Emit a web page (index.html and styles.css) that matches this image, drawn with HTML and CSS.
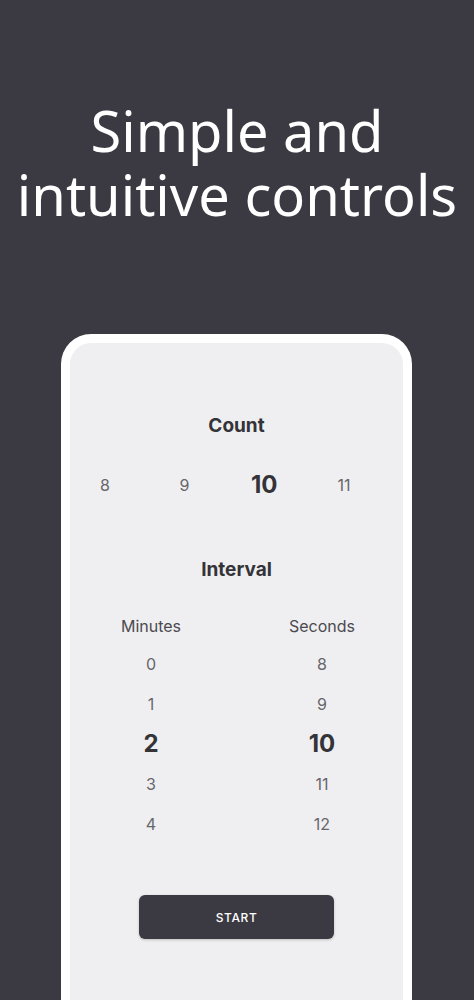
FILE: index.html
```html
<!DOCTYPE html>
<html lang="en">
<head>
    <meta charset="UTF-8">
    <meta name="viewport" content="width=device-width, initial-scale=1.0">
    <title>Simple and intuitive controls</title>
    <link rel="stylesheet" href="styles.css">
</head>
<body>
    <h1 class="headline">
        <span class="headline-line">Simple and</span>
        <span class="headline-line">intuitive controls</span>
    </h1>

    <div class="phone">
        <div class="screen">
            <h2 class="section-title">Count</h2>
            <div class="count-picker">
                <span class="pick">8</span>
                <span class="pick">9</span>
                <span class="pick selected">10</span>
                <span class="pick">11</span>
            </div>

            <h2 class="section-title interval-title">Interval</h2>
            <div class="interval-grid">
                <div class="wheel">
                    <div class="wheel-label">Minutes</div>
                    <div class="wheel-item">0</div>
                    <div class="wheel-item">1</div>
                    <div class="wheel-item selected">2</div>
                    <div class="wheel-item">3</div>
                    <div class="wheel-item">4</div>
                </div>
                <div class="wheel">
                    <div class="wheel-label">Seconds</div>
                    <div class="wheel-item">8</div>
                    <div class="wheel-item">9</div>
                    <div class="wheel-item selected">10</div>
                    <div class="wheel-item">11</div>
                    <div class="wheel-item">12</div>
                </div>
            </div>

            <button class="start-btn">START</button>
        </div>
    </div>
</body>
</html>
```

FILE: styles.css
```css
/* Base */
* {
    margin: 0;
    padding: 0;
    box-sizing: border-box;
}

body {
    background-color: #3b3a42;
    font-family: Inter, Roboto, 'Liberation Sans', sans-serif;
    height: 1000px;
    overflow: hidden;
}

/* Headline */
.headline {
    margin-top: 98px;
    color: #ffffff;
    font-family: 'Noto Sans', sans-serif;
    font-weight: 400;
    font-size: 56px;
    text-align: center;
}

.headline-line {
    display: block;
    height: 64px;
    line-height: 64px;
}

/* Phone frame */
.phone {
    width: 351px;
    margin: 108px 0 0 61px;
    background-color: #ffffff;
    border-radius: 30px 30px 0 0;
    padding: 9px 9px 0 9px;
}

.screen {
    background-color: #efeff1;
    border-radius: 21px 21px 0 0;
    height: 700px;
    padding-top: 71px;
    display: flex;
    flex-direction: column;
    align-items: center;
}

.section-title {
    font-size: 19px;
    font-weight: 700;
    color: #333338;
    line-height: 24px;
}

/* Count picker */
.count-picker {
    display: flex;
    align-self: flex-start;
    margin: 35px 0 0 -5px;
}

.pick {
    width: 79.7px;
    text-align: center;
    font-size: 16px;
    line-height: 24px;
    color: #66666b;
}

.pick.selected,
.wheel-item.selected {
    font-size: 24px;
    font-weight: 700;
    color: #333338;
}

.interval-title {
    margin-top: 61px;
}

/* Interval wheels */
.interval-grid {
    display: grid;
    grid-template-columns: 160px 160px;
    column-gap: 11px;
    margin-top: 32px;
}

.wheel {
    display: flex;
    flex-direction: column;
    align-items: center;
}

.wheel-label {
    font-size: 16px;
    line-height: 24px;
    color: #4a4a50;
    margin-bottom: 6px;
}

.wheel-item {
    height: 40px;
    line-height: 40px;
    font-size: 16px;
    color: #66666b;
}

/* Start button */
.start-btn {
    margin-top: 51px;
    width: 195px;
    height: 44px;
    border: none;
    border-radius: 6px;
    background-color: #3b3a42;
    color: #ffffff;
    font-family: Inter, Roboto, 'Liberation Sans', sans-serif;
    font-size: 12px;
    font-weight: 500;
    letter-spacing: 0.6px;
    box-shadow: 0 1px 3px rgba(0, 0, 0, 0.2);
}
```
